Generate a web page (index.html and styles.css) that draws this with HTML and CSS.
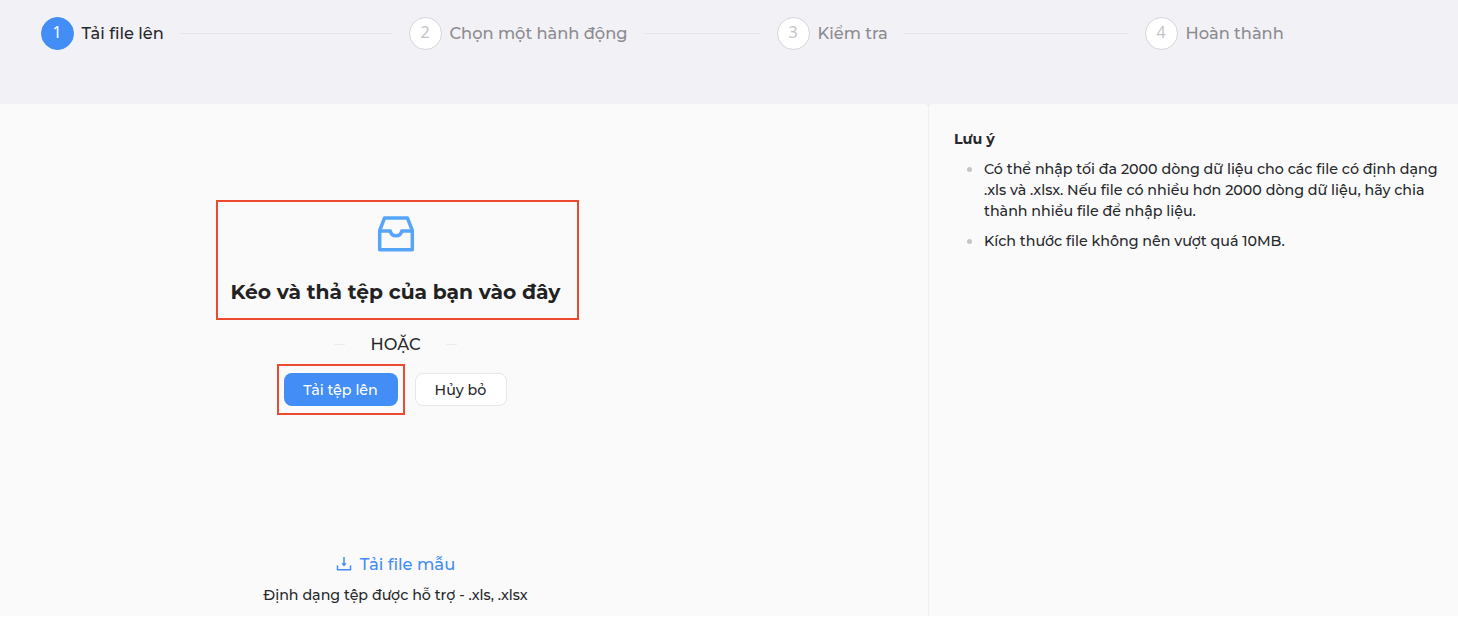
FILE: index.html
```html
<!DOCTYPE html>
<html lang="vi">
<head>
    <meta charset="UTF-8">
    <meta name="viewport" content="width=device-width, initial-scale=1.0">
    <title>Nhập dữ liệu</title>
    <link rel="stylesheet" href="styles.css">
</head>
<body>
    <div class="steps">
        <div class="step active">
            <span class="step-icon">1</span>
            <span class="step-title">Tải file lên</span>
            <span class="step-line"></span>
        </div>
        <div class="step">
            <span class="step-icon">2</span>
            <span class="step-title">Chọn một hành động</span>
            <span class="step-line"></span>
        </div>
        <div class="step">
            <span class="step-icon">3</span>
            <span class="step-title">Kiểm tra</span>
            <span class="step-line"></span>
        </div>
        <div class="step">
            <span class="step-icon">4</span>
            <span class="step-title">Hoàn thành</span>
        </div>
    </div>

    <div class="content">
        <div class="upload">
            <div class="dropzone">
                <svg class="inbox" viewBox="0 0 38 38" fill="none" stroke="#57a5fa" stroke-width="3.5" stroke-linejoin="round">
                    <path d="M2.7 15.3 7.6 2.9H30.4L35.3 15.3V34.8H2.7Z"/>
                    <path d="M2.7 15.9H13.2C13.8 18.8 16 20.8 19 20.8S24.2 18.8 24.8 15.9H35.3"/>
                </svg>
                <h2>Kéo và thả tệp của bạn vào đây</h2>
            </div>

            <div class="divider"><span>HOẶC</span></div>

            <div class="actions">
                <div class="highlight">
                    <button class="btn btn-primary">Tải tệp lên</button>
                </div>
                <button class="btn btn-cancel">Hủy bỏ</button>
            </div>

            <a class="template" href="#">
                <svg class="download" viewBox="0 0 16 16" fill="none" stroke="#438df7" stroke-width="1.5">
                    <path d="M1.5 9.5V13.7H14.5V9.5"/>
                    <path d="M8 1V9"/>
                    <path d="M5.3 7.2H10.7L8 10.6Z" fill="#438df7" stroke="none"/>
                </svg>
                <span>Tải file mẫu</span>
            </a>
            <p class="formats">Định dạng tệp được hỗ trợ - .xls, .xlsx</p>
        </div>

        <div class="notes">
            <h3>Lưu ý</h3>
            <ul>
                <li>Có thể nhập tối đa 2000 dòng dữ liệu cho các file có định dạng .xls và .xlsx. Nếu file có nhiều hơn 2000 dòng dữ liệu, hãy chia thành nhiều file để nhập liệu.</li>
                <li>Kích thước file không nên vượt quá 10MB.</li>
            </ul>
        </div>
    </div>
</body>
</html>
```
FILE: styles.css
```css
* {
    box-sizing: border-box;
}
body {
    margin: 0;
    height: 620px;
    overflow: hidden;
    background-color: #fff;
    color: #27282b;
    font-family: Montserrat, Inter, sans-serif;
    font-size: 14.25px;
}
.steps {
    display: grid;
    grid-template-columns: 352px 352px 352px auto;
    gap: 16px;
    height: 104px;
    padding: 17px 0 0 40.5px;
    background-color: #f2f1f6;
}
.step {
    display: flex;
    align-items: center;
    height: 33px;
    color: #8b8b90;
}
.step.active {
    color: #27282b;
}
.step-icon {
    flex: none;
    width: 33px;
    height: 33px;
    border: 1px solid #d6d6d8;
    border-radius: 50%;
    background-color: #fff;
    color: #c3c3c5;
    font-family: "Noto Sans", sans-serif;
    font-size: 16px;
    line-height: 29px;
    text-align: center;
}
.active .step-icon {
    border-color: #438df7;
    background-color: #438df7;
    color: #fff;
}
.step-title {
    margin-left: 8px;
    font-size: 16.25px;
    font-weight: 500;
    line-height: 23px;
    white-space: nowrap;
}
.step-line {
    flex: 1;
    height: 1px;
    margin-left: 16px;
    background-color: #e6e6e8;
}
.content {
    display: flex;
    height: 512px;
    background-color: #f0eff3;
}
.upload {
    width: 928px;
    padding: 96px 137px 0 0;
    border-radius: 0 4px 0 0;
    background-color: #fafafa;
    display: flex;
    flex-direction: column;
    align-items: center;
}
.dropzone {
    width: 363px;
    height: 120px;
    margin-left: 4px;
    padding: 13px 4px 0 0;
    border: 2px solid #ec4a30;
    text-align: center;
}
.inbox {
    display: block;
    width: 38px;
    height: 38px;
    margin: 0 auto;
}
.dropzone h2 {
    margin: 25px 0 0;
    font-size: 20.25px;
    font-weight: 700;
    line-height: 28px;
    white-space: nowrap;
    color: #222;
}
.divider {
    display: flex;
    align-items: center;
    gap: 25px;
    height: 24px;
    margin-top: 12px;
    font-size: 16.25px;
    font-weight: 500;
}
.divider::before,
.divider::after {
    content: "";
    width: 11px;
    height: 1px;
    background-color: #ececec;
}
.actions {
    display: flex;
    align-items: center;
    gap: 10px;
    margin: 8px 0 0 -8px;
}
.highlight {
    width: 128px;
    height: 51px;
    padding: 7px 5px 0;
    border: 2px solid #ec4a30;
}
.btn {
    display: block;
    height: 33px;
    padding: 0;
    border-radius: 8px;
    font-family: inherit;
    font-size: 14.25px;
    font-weight: 500;
    white-space: nowrap;
    cursor: pointer;
}
.btn-primary {
    width: 114px;
    border: none;
    background-color: #438df7;
    color: #fff;
}
.btn-cancel {
    width: 92px;
    border: 1px solid #e7e7e8;
    background-color: #fff;
    color: #27282b;
}
.template {
    display: flex;
    align-items: center;
    gap: 8px;
    height: 24px;
    margin-top: 137px;
    color: #438df7;
    font-size: 16.4px;
    font-weight: 500;
    text-decoration: none;
}
.download {
    width: 16px;
    height: 16px;
}
.formats {
    margin: 9px 0 0;
    font-weight: 500;
    line-height: 21px;
    white-space: nowrap;
}
.notes {
    flex: 1;
    margin-left: 1px;
    padding: 25px 16px 0 25px;
    border-radius: 4px 0 0 0;
    background-color: #fafafa;
    line-height: 21px;
}
.notes h3 {
    margin: 0;
    font-size: 14.25px;
    font-weight: 700;
    line-height: 21px;
}
.notes ul {
    margin: 9px 0 0;
    padding: 0;
    list-style: none;
}
.notes li {
    position: relative;
    margin-bottom: 9px;
    padding-left: 30px;
    font-weight: 500;
}
.notes li::before {
    content: "";
    position: absolute;
    left: 13px;
    top: 8px;
    width: 5px;
    height: 5px;
    border-radius: 50%;
    background-color: #c4c4c6;
}
```
